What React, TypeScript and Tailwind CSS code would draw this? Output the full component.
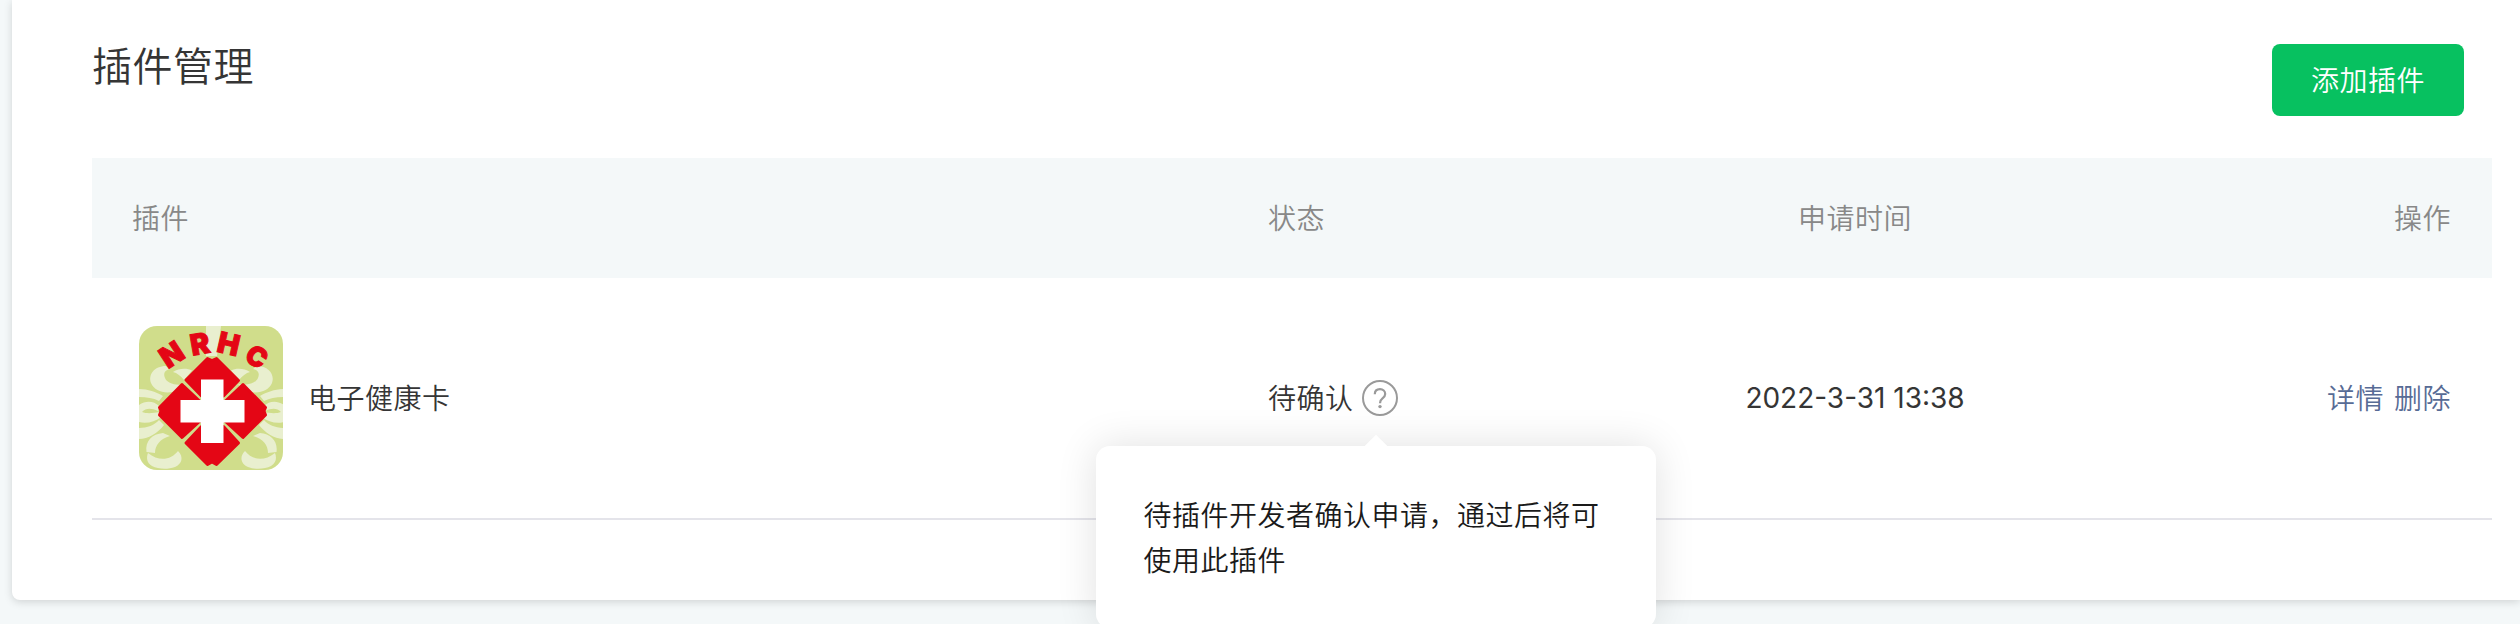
import { useState } from 'react'

interface Plugin {
  name: string
  status: string
  appliedAt: string
  tip: string
}

const PLUGINS: Plugin[] = [
  {
    name: '电子健康卡',
    status: '待确认',
    appliedAt: '2022-3-31 13:38',
    tip: '待插件开发者确认申请，通过后将可使用此插件',
  },
]

const COLUMNS = 'grid grid-cols-[1136px_327px_600px_337px] items-center'

function HalfPattern() {
  return (
    <g fill="#e9efcf">
      <path d="M27 40C15 40 9 49 12 57C16 66 28 69 40 64L46 58C36 60 28 57 26 52C24 47 26 44 31 43z" />
      <path d="M34 46C40 42 48 42 53 44.500L45 54C42 50 38 47 34 46z" />
      <path d="M0 63C9 63 17 66 24 70L20 75C14 72 8 71 0 71z" />
      <path d="M0 79C7 74 15 75 20 80L19 85C12 82 7 82 3 86C8 88 15 87 20 86L22 91C16 96 7 98 0 96z" />
      <path d="M0 102C8 102 16 99 20 94L25 99C19 107 9 113 0 113z" />
      <path d="M24 107L31 110C21 113 16 119 16 127L7.500 126C6 115 13 108 24 107z" />
      <path d="M9 127C20 136 32 134 39 125C45 131 43 138 36 141C28 144 19 143 13 140C8 137 7 132 9 127z" />
    </g>
  )
}

function HealthCardLogo() {
  return (
    <svg viewBox="0 0 144 144" className="h-36 w-36 shrink-0 overflow-visible">
      <defs>
        <clipPath id="logo-clip">
          <rect width="144" height="144" rx="18" />
        </clipPath>
      </defs>
      <g clipPath="url(#logo-clip)">
        <rect width="144" height="144" fill="#d0dd8b" />
        {/* leaf pattern, mirrored around the middle */}
        <HalfPattern />
        <g transform="translate(145 0) scale(-1 1)">
          <HalfPattern />
        </g>
        <path d="M67 0h15l-4 30h-11z" fill="#e9efcf" />
      </g>
      <g
        fill="#e40615"
        stroke="#e40615"
        strokeWidth="1"
        fontFamily="Inter, sans-serif"
        fontWeight="900"
        letterSpacing="0"
        textAnchor="middle"
      >
        <text transform="translate(32.7 28.3) rotate(-33)" y="10.500" fontSize="29">N</text>
        <text transform="translate(61 17.7) rotate(-10)" y="10.500" fontSize="29">R</text>
        <text transform="translate(89.700 17.700) rotate(13)" y="10.500" fontSize="29">H</text>
        <text transform="translate(117.700 30.500) rotate(33)" y="9.800" fontSize="27">C</text>
      </g>
      <g fill="#e40615" stroke="#e40615" strokeWidth="3" strokeLinejoin="round">
        <path d="M47 54L68.500 32.500L73 34.500L77.500 32.500L99.500 54.500L84.500 70H62.500z" />
        <path d="M43 58.500L60.500 75V95.500L43 111.500L20.500 89L22 85L20.500 81.500z" />
        <path d="M104 58.500L86.500 75V95.500L104 111.500L126.500 89L125 85L126.500 81.500z" />
        <path d="M47 117L62.500 100.500H84.500L99.500 117L77.500 138.500L73 136L68.500 138.500z" />
      </g>
      <path
        d="M62 53.500H84.500V74H105.500V96.500H84.500V117H62V96.500H41.500V74H62z"
        fill="#fff"
      />
    </svg>
  )
}

function HelpIcon() {
  return (
    <svg viewBox="0 0 36 36" className="h-9 w-9" fill="none">
      <circle cx="18" cy="18" r="17" stroke="#9a9a9a" strokeWidth="2" />
      <path
        d="M12.800 14.200C12.800 11 15 9.200 18 9.200C21 9.200 23.200 11.200 23.200 13.900C23.200 16 22.100 17.100 20.500 18.300C18.700 19.600 18 20.500 18 23.200"
        stroke="#9a9a9a"
        strokeWidth="2.200"
      />
      <circle cx="18" cy="26.600" r="1.700" fill="#9a9a9a" />
    </svg>
  )
}

function Tooltip({ text }: { text: string }) {
  return (
    <div className="absolute left-1/2 top-[66px] w-[560px] -translate-x-[284px] rounded-[14px] bg-white px-12 pt-12 pb-11 text-[28px] leading-[44.8px] text-[#1a1a1a] shadow-[0_0_40px_rgba(0,0,0,0.12)]">
      <span className="absolute left-1/2 top-[-8px] h-4 w-4 -translate-x-1/2 rotate-45 bg-white" />
      <p className="relative w-[466px]">{text}</p>
    </div>
  )
}

function PluginRow({ plugin }: { plugin: Plugin }) {
  const [showTip, setShowTip] = useState(true)

  return (
    <div className={`${COLUMNS} h-[242px] border-b-2 border-[#e4e4ea]`}>
      <div className="flex items-center gap-[25px] pl-[47px]">
        <HealthCardLogo />
        <span className="pt-[3px]">{plugin.name}</span>
      </div>
      <div className="flex items-center gap-2 pl-10">
        <span className="pt-[3px]">{plugin.status}</span>
        <button
          type="button"
          aria-label={plugin.status}
          className="relative"
          onClick={() => setShowTip(!showTip)}
        >
          <HelpIcon />
        </button>
        {showTip && (
          <div className="relative -ml-[26px] h-9 w-0">
            <Tooltip text={plugin.tip} />
          </div>
        )}
      </div>
      <div className="pt-px text-center font-normal tracking-normal">
        {plugin.appliedAt}
      </div>
      <div className="flex justify-end gap-2.5 pt-[3px] pr-[41px] text-[#576b95]">
        <a>详情</a>
        <a>删除</a>
      </div>
    </div>
  )
}

export default function App() {
  return (
    <div className="h-[624px] overflow-hidden bg-[#f4f8f9] pl-3 font-['Inter','Noto_Sans_CJK_SC',sans-serif] text-[28px] leading-[44.8px] font-[350] tracking-[0.5px] text-[#353535]">
      <div className="h-[600px] rounded-bl-lg bg-white pl-20 pr-7 shadow-[0_2px_8px_rgba(0,0,0,0.15)]">
        <div className="flex h-[158px] items-start justify-between pr-7">
          <h2 className="pt-[37px] text-[40px] leading-[60px]">插件管理</h2>
          <button
            type="button"
            className="mt-11 h-[72px] w-48 rounded-lg bg-[#07c160] pt-0.5 text-white"
          >
            添加插件
          </button>
        </div>
        <div className={`${COLUMNS} h-[120px] bg-[#f4f8f9] pt-0.5 text-[#888]`}>
          <div className="pl-10">插件</div>
          <div className="pl-10">状态</div>
          <div className="text-center">申请时间</div>
          <div className="pr-[41px] text-right">操作</div>
        </div>
        {PLUGINS.map(plugin => (
          <PluginRow key={plugin.name} plugin={plugin} />
        ))}
      </div>
    </div>
  )
}
